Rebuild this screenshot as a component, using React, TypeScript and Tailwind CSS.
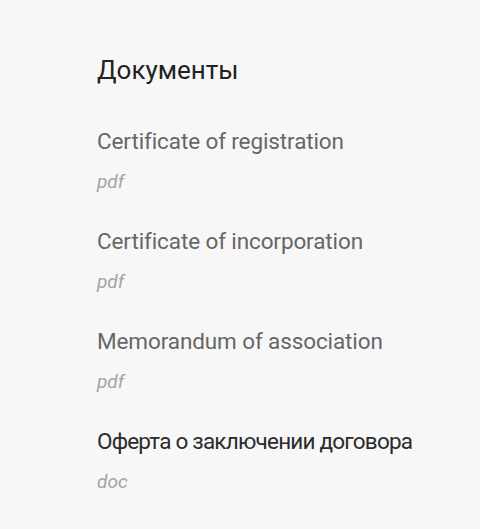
const docs = [
  { title: 'Certificate of registration', ext: 'pdf', dark: false },
  { title: 'Certificate of incorporation', ext: 'pdf', dark: false },
  { title: 'Memorandum of association', ext: 'pdf', dark: false },
  { title: 'Оферта о заключении договора', ext: 'doc', dark: true },
];

export default function App() {
  return (
    <div className="min-h-[529px] w-full bg-[#f7f7f7] pl-[97px] pt-[52px] font-['Roboto',sans-serif]">
      <h2 className="text-[26px] leading-[36px] text-[#222]">Документы</h2>
      <ul className="mt-[41px] flex flex-col gap-[36px]">
        {docs.map((d) => (
          <li key={d.title} className="flex flex-col gap-[18px]">
            <a
              href="#"
              className={`text-[22.5px] leading-[24px] ${
                d.dark ? 'tracking-[-0.035em] text-[#2b2b2b]' : 'tracking-[-0.005em] text-[#666]'
              }`}
            >
              {d.title}
            </a>
            <span className="text-[19px] italic leading-[22px] text-[#a3a3a3]">{d.ext}</span>
          </li>
        ))}
      </ul>
    </div>
  );
}
